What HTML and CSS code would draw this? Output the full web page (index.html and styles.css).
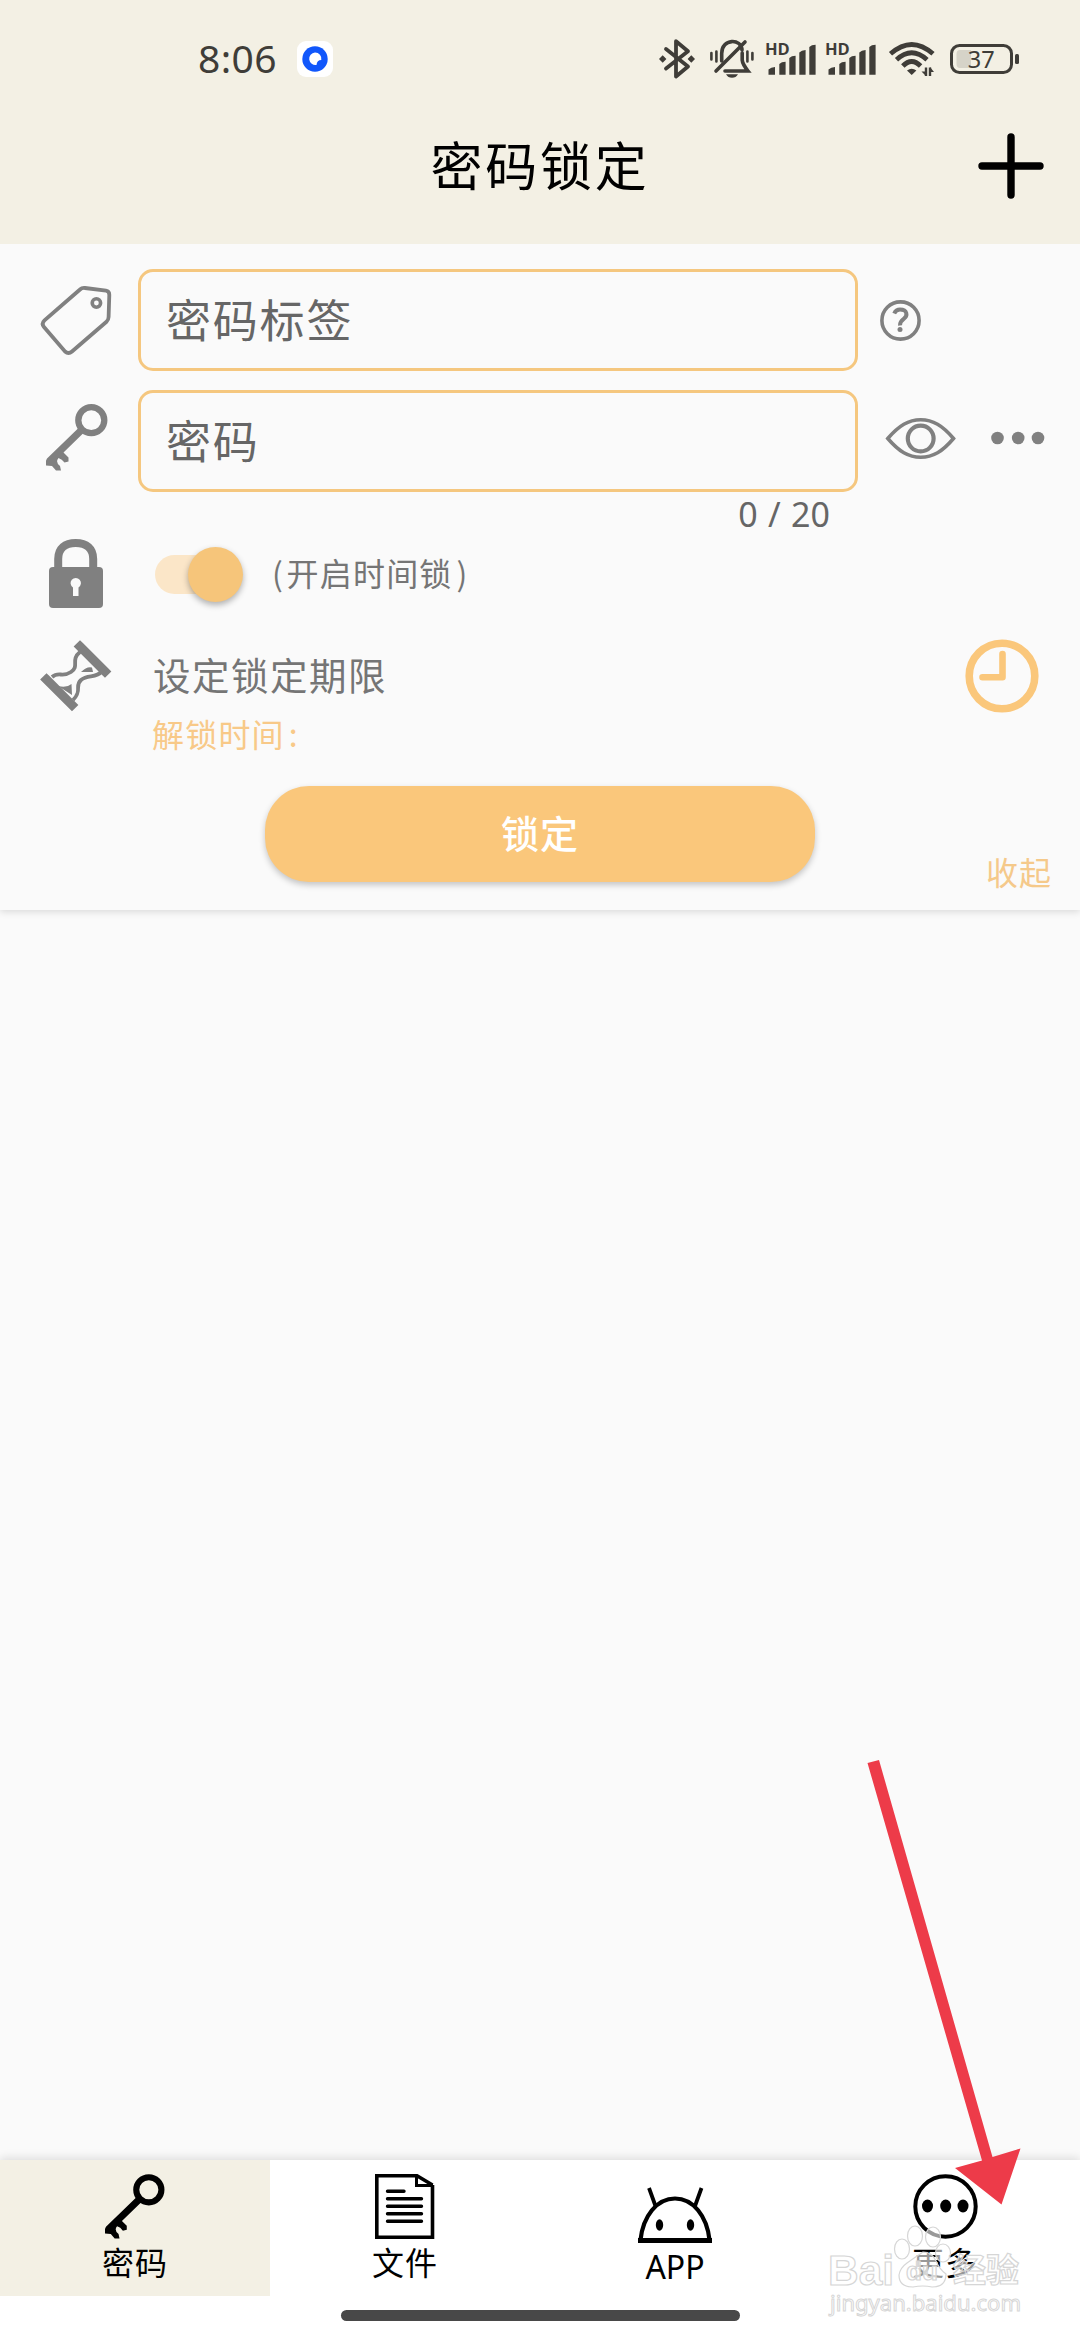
FILE: index.html
```html
<!DOCTYPE html>
<html lang="zh-CN">
<head>
    <meta charset="UTF-8">
    <meta name="viewport" content="width=device-width, initial-scale=1.0">
    <title>密码锁定</title>
    <link rel="stylesheet" href="styles.css">
</head>
<body>
    <svg class="symbols" width="0" height="0">
        <symbol id="key" viewBox="0 0 62 67">
            <circle cx="45.3" cy="16.2" r="13" fill="none" stroke="currentColor" stroke-width="6.3"/>
            <path d="M33 23.5L1 54.5Q-1 58 0 61.5L6 62L10 66.5L15 66.5L14 62Q9 58 12.5 54Q16 55 18.5 58.5L22.5 57.5L22.5 53.5L17.5 48.5L38 28.5Z" fill="currentColor"/>
        </symbol>
        <symbol id="bars" viewBox="0 0 50 34">
            <path d="M2.5 32.8V27.5Q5 25 9 25V32.8ZM13.3 32.8V22Q15.5 19.7 19.6 19.7V32.8ZM23.3 32.8V16Q25.5 13.7 29.6 13.7V32.8ZM33.3 32.8V10.5Q35.5 8 39.6 8V32.8ZM43.3 32.8V5Q45.5 2.7 49.6 2.7V32.8Z" fill="currentColor"/>
        </symbol>
    </svg>

    <header class="header">
        <div class="status-bar">
            <span class="time">8:06</span>
            <span class="app-badge">
                <svg width="26" height="26" viewBox="0 0 26 26">
                    <circle cx="13" cy="13" r="12.7" fill="#1157fb"/>
                    <path d="M13 6.5A6.3 6.3 0 0 1 19.3 14Q15 14 14.5 19A6.3 6.3 0 1 1 13 6.5Z" fill="#fff"/>
                </svg>
            </span>
            <div class="status-icons">
                <svg class="bluetooth" width="36" height="40" viewBox="0 0 36 40" fill="none" stroke="currentColor" stroke-width="3.8" stroke-linecap="round" stroke-linejoin="round">
                    <path d="M7 10L29 27.5L17 37.5V2.2L29 12.3L7 29.5"/>
                    <path d="M0 20L3.7 16.3L7.4 20L3.7 23.7ZM28.6 20L32.3 16.3L36 20L32.3 23.7Z" fill="currentColor" stroke="none"/>
                </svg>
                <svg class="bell" width="44" height="38" viewBox="0 0 44 38" fill="none" stroke="currentColor" stroke-width="3.6" stroke-linecap="round">
                    <path d="M11.7 21V13.5C11.7 -1.8 31.5 -1.8 32 10M32.2 13V20Q32.5 24 38 31H15"/>
                    <path d="M6 31L35 2"/>
                    <path d="M1.4 13V19.5M6.4 11.5V21.5M37.4 11.5V21.5M42.4 13V19.5" stroke-width="2.6"/>
                    <path d="M16 34.3H28Q26 37.8 22 37.8T16 34.3Z" fill="currentColor" stroke="none"/>
                </svg>
                <svg class="signal" width="50" height="34">
                    <text x="-1" y="13" class="hd">HD</text>
                    <use href="#bars"/>
                </svg>
                <svg class="signal" width="50" height="34">
                    <text x="-1" y="13" class="hd">HD</text>
                    <use href="#bars"/>
                </svg>
                <svg class="wifi" width="46" height="36" viewBox="0 0 46 36" fill="none" stroke="currentColor" stroke-width="4.8">
                    <path d="M1.5 12.8Q22.7 -6 44 12.8M7.5 18.8Q22.7 4.8 38 18.8M13.8 25Q22.7 16 31.6 25"/>
                    <path d="M18 29.5Q22.7 26 27.4 29.5L22.7 34Z" fill="currentColor" stroke="none"/>
                    <path d="M37 26.5V35M41 35V26.5" stroke-width="2.4"/>
                    <path d="M32.5 30.5H37V35ZM45 31H41V26Z" fill="currentColor" stroke="none"/>
                </svg>
                <svg class="battery" width="69" height="30" viewBox="0 0 69 30">
                    <path d="M10 6H21V24H10Q6.5 24 6.5 20V10Q6.5 6 10 6Z" fill="#d6d3c8"/>
                    <rect x="1.5" y="1.5" width="60" height="27" rx="8" fill="none" stroke="currentColor" stroke-width="3"/>
                    <rect x="65" y="10" width="4" height="10" rx="1.5" fill="currentColor"/>
                    <text x="31.3" y="23.7" text-anchor="middle" class="level">37</text>
                </svg>
            </div>
        </div>
        <div class="title-bar">
            <h1>密码锁定</h1>
            <svg class="add" width="66" height="66" viewBox="0 0 66 66" stroke="#000" stroke-width="7.4" stroke-linecap="round">
                <path d="M33 4V62M4 33H62"/>
            </svg>
        </div>
    </header>

    <main class="panel">
        <div class="row">
            <div class="row-icon">
                <svg class="tag" width="70" height="69" viewBox="0 0 70 69" fill="none" stroke="currentColor" stroke-width="3.8">
                    <path d="M39 3.5Q41 1.6 44 2L65 4.7Q68.4 5.2 68.3 9L67.6 31Q67.5 34 65.5 35.7L31 65.5Q27.5 68.500 24 65.5L3 41Q.2 37.5 3.5 34.3Z"/>
                    <circle cx="55.4" cy="17" r="4.2" stroke-width="3.6"/>
                </svg>
            </div>
            <label class="field">密码标签</label>
            <svg class="help" width="41" height="41" viewBox="0 0 41 41">
                <circle cx="20.5" cy="20.5" r="18.6" fill="none" stroke="currentColor" stroke-width="3.6"/>
                <path d="M14.2 13.5Q16 9.6 20 9.6C27.5 9.6 27.8 15.8 24 18.6Q19.7 21.8 20 25.5" fill="none" stroke="currentColor" stroke-width="4"/>
                <circle cx="20" cy="29.5" r="2.5" fill="currentColor"/>
            </svg>
        </div>

        <div class="row row-password">
            <div class="row-icon">
                <svg class="key" width="62" height="67"><use href="#key"/></svg>
            </div>
            <label class="field">密码</label>
            <svg class="eye" width="70" height="41" viewBox="0 0 70 41" fill="none" stroke="currentColor">
                <path d="M1.8 20.5C13 7.5 22.5 1.8 34.7 1.8S56.5 7.5 67.5 20.5C56.5 33.5 47 39.2 34.7 39.2S13 33.5 1.8 20.5Z" stroke-width="3.6"/>
                <circle cx="34.7" cy="20.5" r="12.9" stroke-width="4.2"/>
            </svg>
            <svg class="dots" width="54" height="14" viewBox="0 0 54 14" fill="currentColor">
                <circle cx="6.5" cy="7" r="6.3"/>
                <circle cx="27.2" cy="7" r="6.3"/>
                <circle cx="47" cy="7" r="6.3"/>
            </svg>
        </div>
        <div class="counter">0 / 20</div>

        <div class="row row-lock">
            <div class="row-icon">
                <svg class="lock" width="54" height="69" viewBox="0 0 54 69">
                    <path d="M9.2 30V20C9.2 9.5 16 4 26.7 4S44.2 9.5 44.2 20V30" fill="none" stroke="currentColor" stroke-width="8"/>
                    <rect y="28" width="54" height="41" rx="4" fill="currentColor"/>
                    <path d="M24 57V48.5A5.2 5.2 0 1 1 29.5 48.5V57Z" fill="#fafafa"/>
                </svg>
            </div>
            <div class="switch"><span class="thumb"></span></div>
            <span class="switch-text"><i>(</i>开启时间锁<i>)</i></span>
        </div>

        <div class="row row-limit">
            <div class="row-icon">
                <svg class="hourglass" width="68" height="68" viewBox="0 0 68 68" fill="none" stroke="currentColor">
                    <path d="M38 4.500L63 29.500M4.500 37.500L30 63" stroke-width="9" stroke-linecap="square" stroke-linejoin="round"/>
                    <path d="M38 10C28 18 38 24 29 30S17 29 10 35M60 29C54 37 46 32 39 38S41 48 31 58" stroke-width="3.8"/>
                    <path d="M16 44Q25 46 29.5 42L30 53ZM39 30Q45 24 50 25.5L51 30Z" fill="currentColor" stroke="none"/>
                </svg>
            </div>
            <span class="limit-text">设定锁定期限</span>
            <svg class="clock" width="74" height="74" viewBox="0 0 74 74" fill="none" stroke="currentColor">
                <circle cx="37" cy="37" r="32.8" stroke-width="7.6"/>
                <path d="M37.5 15V38.2H17.5" stroke-width="6.6" stroke-linecap="round" stroke-linejoin="round"/>
            </svg>
        </div>
        <div class="unlock-time">解锁时间<i>:</i></div>

        <div class="actions">
            <button class="lock-btn">锁定</button>
            <a class="collapse">收起</a>
        </div>
    </main>

    <section class="list"></section>

    <nav class="tabs">
        <a class="tab active">
            <svg class="tab-key" width="60" height="65"><use href="#key"/></svg>
            <span>密码</span>
        </a>
        <a class="tab">
            <svg width="60" height="65" viewBox="0 0 60 65" fill="none" stroke="#000" stroke-width="3.6">
                <path d="M57.5 11V63.2H1.8V1.8H42L57.5 11"/>
                <path d="M41.5 1V11.5H58" stroke-width="3"/>
                <path d="M12.5 17.2H29M12.5 24.7H46.5M12.5 32.2H46.5M12.5 39.8H46.5M12.5 47.3H46.5" stroke-linecap="round" stroke-width="3.4"/>
            </svg>
            <span>文件</span>
        </a>
        <a class="tab tab-app">
            <svg width="74" height="55" viewBox="0 0 74 55" fill="none" stroke="#000" stroke-width="4.2">
                <path d="M2.5 52C5 28 19 10.5 37 10.5S69 28 71.5 52"/>
                <path d="M11 0L17.5 18M63.5 0L57 18" stroke-width="3.8"/>
                <path d="M0 52.5H74" stroke-width="5"/>
                <ellipse cx="21.5" cy="37" rx="3.7" ry="5.7" fill="#000" stroke="none"/>
                <ellipse cx="52.5" cy="37" rx="3.7" ry="5.7" fill="#000" stroke="none"/>
            </svg>
            <span>APP</span>
        </a>
        <a class="tab">
            <svg width="65" height="65" viewBox="0 0 65 65">
                <circle cx="32.5" cy="32.5" r="30.2" fill="none" stroke="#000" stroke-width="4"/>
                <ellipse cx="14.5" cy="32" rx="5.5" ry="6.4"/>
                <ellipse cx="32.7" cy="32" rx="5.5" ry="6.4"/>
                <ellipse cx="50" cy="32" rx="5.5" ry="6.4"/>
            </svg>
            <span>更多</span>
        </a>
    </nav>
    <div class="gesture"><span class="gesture-bar"></span></div>

    <!-- pointer to the last tab -->
    <svg class="arrow" width="154" height="446" viewBox="0 0 154 446">
        <path d="M0.500 3L12 0L125.500 397L153.500 388.500L134.500 444.500L88 408L115 400.500Z" fill="#ed3b49"/>
    </svg>

    <svg class="watermark" width="204" height="104" viewBox="0 0 204 104">
        <g class="wm">
            <text x="2" y="64" class="wm-name" textLength="66" lengthAdjust="spacingAndGlyphs">Bai</text>
            <ellipse cx="76" cy="28" rx="7.5" ry="10"/>
            <ellipse cx="89" cy="15" rx="7.5" ry="10"/>
            <ellipse cx="107" cy="16" rx="7.5" ry="10"/>
            <ellipse cx="117" cy="32" rx="7.5" ry="9"/>
            <path d="M97 31Q106 31 110 40T120 53Q120 66 106 66Q97 64 87 66Q73 66 73 54Q74 47 81 42T97 31Z"/>
            <text x="80" y="59" class="wm-du">du</text>
            <text x="127" y="61" class="wm-cn" textLength="66" lengthAdjust="spacingAndGlyphs">经验</text>
            <text x="4" y="90" class="wm-url" textLength="191" lengthAdjust="spacingAndGlyphs">jingyan.baidu.com</text>
        </g>
    </svg>
</body>
</html>
```

FILE: styles.css
```css
:root {
    --cream: #f3f0e4;
    --bg: #fafafa;
    --orange: #f5c77f;
    --gray: #808080;
}

* {
    box-sizing: border-box;
    margin: 0;
    padding: 0;
}

body {
    position: relative;
    display: flex;
    flex-direction: column;
    width: 1080px;
    height: 2340px;
    overflow: hidden;
    background: var(--bg);
    color: #000;
    font-family: "Noto Sans CJK SC", sans-serif;
}

svg {
    display: block;
    flex: none;
    overflow: visible;
}

.symbols {
    position: absolute;
}

/* header */
.header {
    position: relative;
    z-index: 1;
    height: 244px;
    flex: none;
    background: var(--cream);
}

.status-bar {
    display: flex;
    align-items: center;
    height: 118px;
    padding: 0 61px 0 198px;
    color: #3f3d38;
}

.time {
    width: 99px;
    padding-bottom: 3px;
    font-family: "Noto Sans", sans-serif;
    font-size: 39px;
    letter-spacing: 0.4px;
    white-space: nowrap;
}

.app-badge {
    display: flex;
    align-items: center;
    justify-content: center;
    width: 36px;
    height: 36px;
    border-radius: 9px;
    background: #fff;
}

.status-icons {
    display: flex;
    align-items: center;
    margin-left: auto;
}

.bell {
    margin-left: 15px;
}

.signal {
    margin-left: 12px;
}

.signal + .signal {
    margin-left: 10px;
}

.wifi {
    margin-left: 13px;
}

.battery {
    margin-left: 15px;
}

.hd {
    font: bold 16.5px "Open Sans", sans-serif;
    fill: currentColor;
}

.level {
    font: 23.5px "Noto Sans", sans-serif;
    fill: currentColor;
}

.title-bar {
    display: grid;
    grid-template-columns: 1fr auto 1fr;
    align-items: center;
    height: 96px;
    padding-right: 36px;
    padding-left: 36px;
}

.title-bar h1 {
    grid-column: 2;
    padding-bottom: 5px;
    font-size: 52px;
    font-weight: 400;
    letter-spacing: 2.8px;
    line-height: 91px;
}

.add {
    justify-self: end;
}

/* form */
.panel {
    flex: none;
    height: 666px;
    padding-top: 25px;
    color: var(--gray);
    box-shadow: 0 2px 7px rgba(0, 0, 0, 0.13);
}

.row {
    display: flex;
    align-items: center;
    height: 102px;
}

.row-icon {
    display: flex;
    flex: none;
    width: 138px;
    padding-left: 41px;
}

.field {
    display: block;
    width: 720px;
    height: 102px;
    padding-left: 25px;
    border: 3px solid var(--orange);
    border-radius: 15px;
    color: #666;
    font-size: 45px;
    letter-spacing: 1.8px;
    line-height: 93px;
}

.help {
    margin-left: 22px;
}

.row-password {
    margin-top: 19px;
}

.key {
    margin-left: 5px;
    margin-bottom: 7px;
}

.eye {
    margin: 0 0 5px 28px;
}

.dots {
    margin: 0 0 6px 35px;
}

.counter {
    height: 40px;
    padding-right: 250px;
    color: #666;
    font-family: "Noto Sans", sans-serif;
    font-size: 34px;
    line-height: 45px;
    text-align: right;
    word-spacing: 1.5px;
}

.row-lock {
    height: 84px;
}

.lock {
    margin-left: 8px;
    margin-bottom: 1px;
}

.switch {
    display: flex;
    align-items: center;
    width: 87px;
    height: 39px;
    margin-left: 17px;
    border-radius: 20px;
    background: linear-gradient(90deg, #fbe6c8 75%, transparent 75%);
}

.thumb {
    width: 55px;
    height: 55px;
    margin-left: 33px;
    flex: none;
    border-radius: 50%;
    background: #f6c57a;
    box-shadow: 0 3px 6px rgba(0, 0, 0, 0.3);
}

.switch-text {
    margin-left: 29px;
    padding-bottom: 5px;
    color: #757575;
    font-size: 32px;
    letter-spacing: 1.2px;
    line-height: 40px;
}

.switch-text i,
.unlock-time i {
    padding: 0 2.5px 0 1px;
    font-style: normal;
}

.switch-text i:last-child,
.unlock-time i {
    padding: 0 0 0 4px;
}

.row-limit {
    height: 80px;
    margin-top: 20px;
}

.hourglass {
    margin-left: 1px;
}

.limit-text {
    margin-left: 15px;
    padding-bottom: 5px;
    color: #757575;
    font-size: 37.5px;
    letter-spacing: 1.5px;
    line-height: 50px;
}

.clock {
    margin-left: auto;
    margin-right: 41px;
    color: #fac77b;
}

.unlock-time {
    height: 40px;
    padding-left: 152px;
    color: #f8c988;
    font-size: 32px;
    letter-spacing: 1.2px;
    line-height: 35px;
}

.actions {
    display: grid;
    grid-template-columns: 1fr 550px 1fr;
    margin-top: 30px;
}

.lock-btn {
    grid-column: 2;
    height: 96px;
    padding-bottom: 5px;
    border: none;
    border-radius: 44px;
    background: #fac77b;
    box-shadow: 0 3px 6px rgba(0, 0, 0, 0.22);
    color: #fff;
    font-family: inherit;
    font-size: 38px;
    font-weight: 500;
    letter-spacing: 1px;
}

.collapse {
    justify-self: end;
    margin-top: 65px;
    padding-right: 28px;
    color: #f5c98a;
    font-size: 32px;
    letter-spacing: 1px;
    line-height: 40px;
}

.list {
    flex: 1;
}

/* bottom tabs */
.tabs {
    display: grid;
    grid-template-columns: repeat(4, 1fr);
    flex: none;
    height: 136px;
    background: #fff;
    box-shadow: 0 -2px 9px rgba(0, 0, 0, 0.12);
}

.tab {
    display: flex;
    flex-direction: column;
    align-items: center;
    padding-top: 14px;
    font-size: 32px;
    letter-spacing: 1px;
    line-height: 40px;
}

.tab span {
    margin-top: 2px;
}

.tab-app {
    padding-top: 28px;
    font-family: "Noto Sans", sans-serif;
    letter-spacing: 0;
}

.tab.tab-app span {
    margin-top: 4px;
}

.tab.active {
    background: var(--cream);
}

.gesture {
    display: flex;
    justify-content: center;
    position: relative;
    flex: none;
    height: 44px;
    padding-top: 14px;
    background: #fff;
}

.gesture-bar {
    width: 399px;
    height: 11px;
    border-radius: 6px;
    background: #484848;
}

/* overlays */
.arrow {
    position: absolute;
    left: 867px;
    top: 1760px;
}

.watermark {
    position: absolute;
    left: 826px;
    top: 2221px;
}

.wm {
    fill: rgba(255, 255, 255, 0.6);
    stroke: #d6d6d6;
    stroke-width: 1.2;
}

.wm-name {
    font: bold 43px "Liberation Sans", sans-serif;
}

.wm-du {
    font: bold 26px "Liberation Sans", sans-serif;
}

.wm-cn {
    font: bold 33px "Noto Sans CJK SC", sans-serif;
}

.wm-url {
    font: 22px "Noto Sans", sans-serif;
    stroke-width: 1;
}
```
